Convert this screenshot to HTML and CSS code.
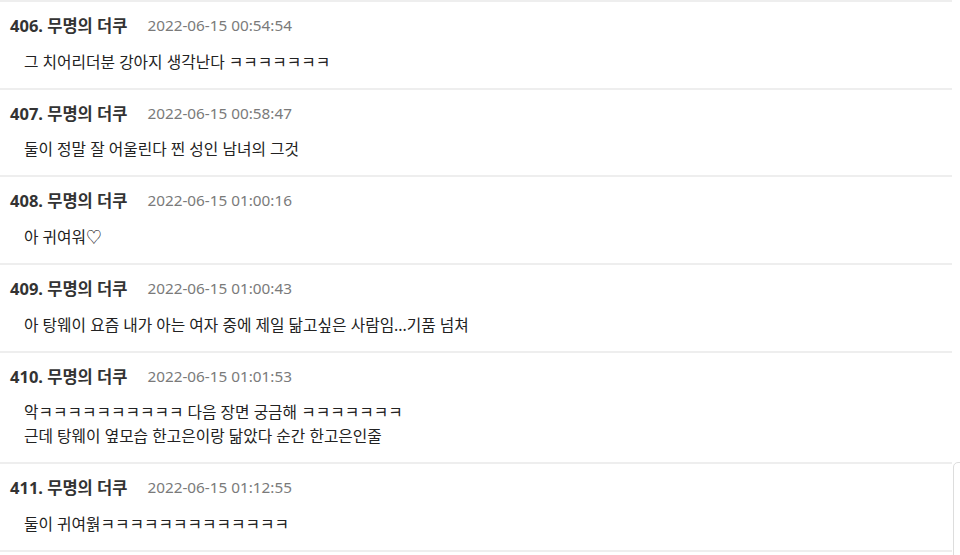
FILE: index.html
```html
<!DOCTYPE html>
<html lang="ko">
<head>
<meta charset="utf-8">
<link rel="stylesheet" href="styles.css">
</head>
<body>
<div class="page">
  <ul class="comments">
    <li class="comment">
      <div class="head"><span class="num">406. 무명의 더쿠</span><span class="date">2022-06-15 00:54:54</span></div>
      <div class="text">그 치어리더분 강아지 생각난다 ㅋㅋㅋㅋㅋㅋㅋ</div>
    </li>
    <li class="comment">
      <div class="head"><span class="num">407. 무명의 더쿠</span><span class="date">2022-06-15 00:58:47</span></div>
      <div class="text">둘이 정말 잘 어울린다 찐 성인 남녀의 그것</div>
    </li>
    <li class="comment">
      <div class="head"><span class="num">408. 무명의 더쿠</span><span class="date">2022-06-15 01:00:16</span></div>
      <div class="text">아 귀여워♡</div>
    </li>
    <li class="comment">
      <div class="head"><span class="num">409. 무명의 더쿠</span><span class="date">2022-06-15 01:00:43</span></div>
      <div class="text">아 탕웨이 요즘 내가 아는 여자 중에 제일 닮고싶은 사람임...기품 넘쳐</div>
    </li>
    <li class="comment">
      <div class="head"><span class="num">410. 무명의 더쿠</span><span class="date">2022-06-15 01:01:53</span></div>
      <div class="text">악ㅋㅋㅋㅋㅋㅋㅋㅋㅋㅋ 다음 장면 궁금해 ㅋㅋㅋㅋㅋㅋㅋ<br>근데 탕웨이 옆모습 한고은이랑 닮았다 순간 한고은인줄</div>
    </li>
    <li class="comment">
      <div class="head"><span class="num">411. 무명의 더쿠</span><span class="date">2022-06-15 01:12:55</span></div>
      <div class="text">둘이 귀여웕ㅋㅋㅋㅋㅋㅋㅋㅋㅋㅋㅋㅋㅋ</div>
    </li>
  </ul>
  <div class="side-edge"></div>
</div>
</body>
</html>
```
FILE: styles.css
```css
html, body {
  margin: 0;
  padding: 0;
  background: #fff;
}
body {
  font-family: "Noto Sans", "Noto Sans CJK KR", sans-serif;
  color: #222;
}
.page {
  position: relative;
  width: 960px;
  height: 555px;
  overflow: hidden;
}
.comments {
  list-style: none;
  margin: 0;
  padding: 0;
  width: 952px;
  border-top: 2px solid #eeeeee;
}
.comment {
  padding: 11px 0 14.2px 0;
  border-bottom: 2px solid #eeeeee;
}
.head {
  display: flex;
  align-items: center;
  height: 24px;
  padding-left: 10px;
}
.num {
  font-size: 16.5px;
  font-weight: bold;
  color: #333;
}
.date {
  margin-left: 20px;
  font-size: 15.3px;
  color: #7a7a7a;
}
.text {
  margin-top: 12.5px;
  padding-left: 24px;
  font-size: 15.75px;
  line-height: 24px;
  color: #222;
}
.side-edge {
  position: absolute;
  left: 953px;
  top: 462px;
  width: 30px;
  height: 120px;
  border: 1px solid #dddddd;
  border-radius: 5px;
  background: #fff;
}
```
